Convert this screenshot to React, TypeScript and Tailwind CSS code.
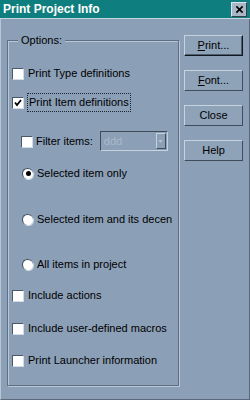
import type { ReactNode } from "react";

const Check = ({ checked }: { checked?: boolean }) => (
  <span className="relative w-[11px] h-[11px] shrink-0 bg-white border-t border-l border-[#4a5868] shadow-[1px_1px_0_#d2dce6]">
    {checked && (
      <svg viewBox="0 0 10 10" className="absolute inset-0 w-[10px] h-[10px]">
        <path d="M2 4.5 L4 7 L8 2" fill="none" stroke="#000" strokeWidth="1.8" />
      </svg>
    )}
  </span>
);

const Radio = ({ checked }: { checked?: boolean }) => (
  <span className="relative w-[11px] h-[11px] shrink-0 rounded-full bg-white border-t border-l border-[#3c4856] shadow-[1px_1px_0_#d2dce6] flex items-center justify-center">
    {checked && <span className="w-[5px] h-[5px] rounded-full bg-black" />}
  </span>
);

const Row = ({
  children,
  className,
}: {
  children: ReactNode;
  className?: string;
}) => (
  <div className={`h-[20px] flex items-center whitespace-nowrap text-[11px] ${className ?? ""}`}>{children}</div>
);

const Btn = ({
  children,
  isDefault,
}: {
  children: ReactNode;
  isDefault?: boolean;
}) => (
  <button
    className={`w-[59px] h-[21px] shrink-0 flex items-center justify-center text-[11px] text-black bg-[#8ea2b8] border border-t-[#c6d2de] border-l-[#c6d2de] ${
      isDefault
        ? "border-r-[#101820] border-b-[#101820] shadow-[inset_-1px_-1px_0_#4e5e70]"
        : "border-r-[#3e4c5c] border-b-[#3e4c5c]"
    }`}
  >
    {children}
  </button>
);

export default function App() {
  return (
    <div className="w-[250px] h-[400px] bg-[#8b9fb6] flex flex-col font-['Liberation_Sans',Arial,sans-serif] text-black">
      {/* Title bar */}
      <div className="h-[19px] shrink-0 bg-[#0f7e7e] border-b border-[#c8d4e0] flex items-center justify-between pl-[3px] pr-[3px]">
        <span className="text-white font-bold text-[12px] leading-none font-['Liberation_Sans_Narrow','Liberation_Sans',sans-serif]">
          Print Project Info
        </span>
        <span className="w-[16px] h-[15px] bg-[#a9b7c6] border border-t-[#dde5ee] border-l-[#dde5ee] border-r-[#34404c] border-b-[#34404c] flex items-center justify-center">
          <svg viewBox="0 0 10 10" className="w-[9px] h-[9px]">
            <path d="M1.5 1.5 L8.5 8.5 M8.5 1.5 L1.5 8.5" stroke="#000" strokeWidth="1.8" />
          </svg>
        </span>
      </div>

      {/* Body */}
      <div className="flex-1 flex px-[6px] pt-[14px] pb-[13px] border-l border-l-[#b8c6d4] border-r border-r-[#5a6a7c] border-b border-b-[#5a6a7c]">
        <fieldset className="w-[172px] min-w-0 shrink-0 overflow-hidden border border-[#5d6f84] shadow-[inset_1px_1px_0_#bac8d6,1px_1px_0_#bac8d6] pl-[4px] pr-[2px]">
          <legend className="ml-[6px] px-[3px] text-[11px] leading-[14px] bg-[#8b9fb6]">
            Options:
          </legend>

          <Row className="mt-[16px] gap-[5px]">
            <Check />
            <span>Print Type definitions</span>
          </Row>

          <Row className="mt-[9px] gap-[4px]">
            <Check checked />
            <span className="px-[1px] h-[19px] flex items-center border border-dotted border-[#1c2430]">
              Print Item definitions
            </span>
          </Row>

          <Row className="mt-[19px] pl-[9px] gap-[4px]">
            <Check />
            <span>Filter items:</span>
            <span className="ml-[3px] w-[68px] h-[20px] flex items-center justify-between bg-[#8b9fb6] border border-t-[#3e4c5c] border-l-[#3e4c5c] border-b-[#c6d2de] border-r-[#c6d2de] pl-[3px] pr-[1px]">
              <span className="text-[#a9b9ca]">ddd</span>
              <span className="w-[10px] h-[16px] border border-t-[#c6d2de] border-l-[#c6d2de] border-r-[#3e4c5c] border-b-[#3e4c5c] flex items-center justify-center">
                <svg viewBox="0 0 6 4" className="w-[5px] h-[3px]">
                  <path d="M0 0 L6 0 L3 4 Z" fill="#b3c1d0" />
                </svg>
              </span>
            </span>
          </Row>

          <Row className="mt-[12px] pl-[10px] gap-[4px]">
            <Radio checked />
            <span>Selected item only</span>
          </Row>

          <Row className="mt-[26px] pl-[10px] gap-[4px]">
            <Radio />
            <span>Selected item and its decen</span>
          </Row>

          <Row className="mt-[25px] pl-[10px] gap-[4px]">
            <Radio />
            <span>All items in project</span>
          </Row>

          <Row className="mt-[11px] gap-[5px]">
            <Check />
            <span>Include actions</span>
          </Row>

          <Row className="mt-[13px] gap-[5px]">
            <Check />
            <span>Include user-defined macros</span>
          </Row>

          <Row className="mt-[12px] gap-[5px]">
            <Check />
            <span>Print Launcher information</span>
          </Row>
        </fieldset>

        {/* Buttons */}
        <div className="ml-[5px] pt-[2px] flex flex-col gap-[14px]">
          <Btn isDefault>
            <span>
              <span className="underline">P</span>rint...
            </span>
          </Btn>
          <Btn>
            <span>
              <span className="underline">F</span>ont...
            </span>
          </Btn>
          <Btn>Close</Btn>
          <Btn>Help</Btn>
        </div>
      </div>
    </div>
  );
}
